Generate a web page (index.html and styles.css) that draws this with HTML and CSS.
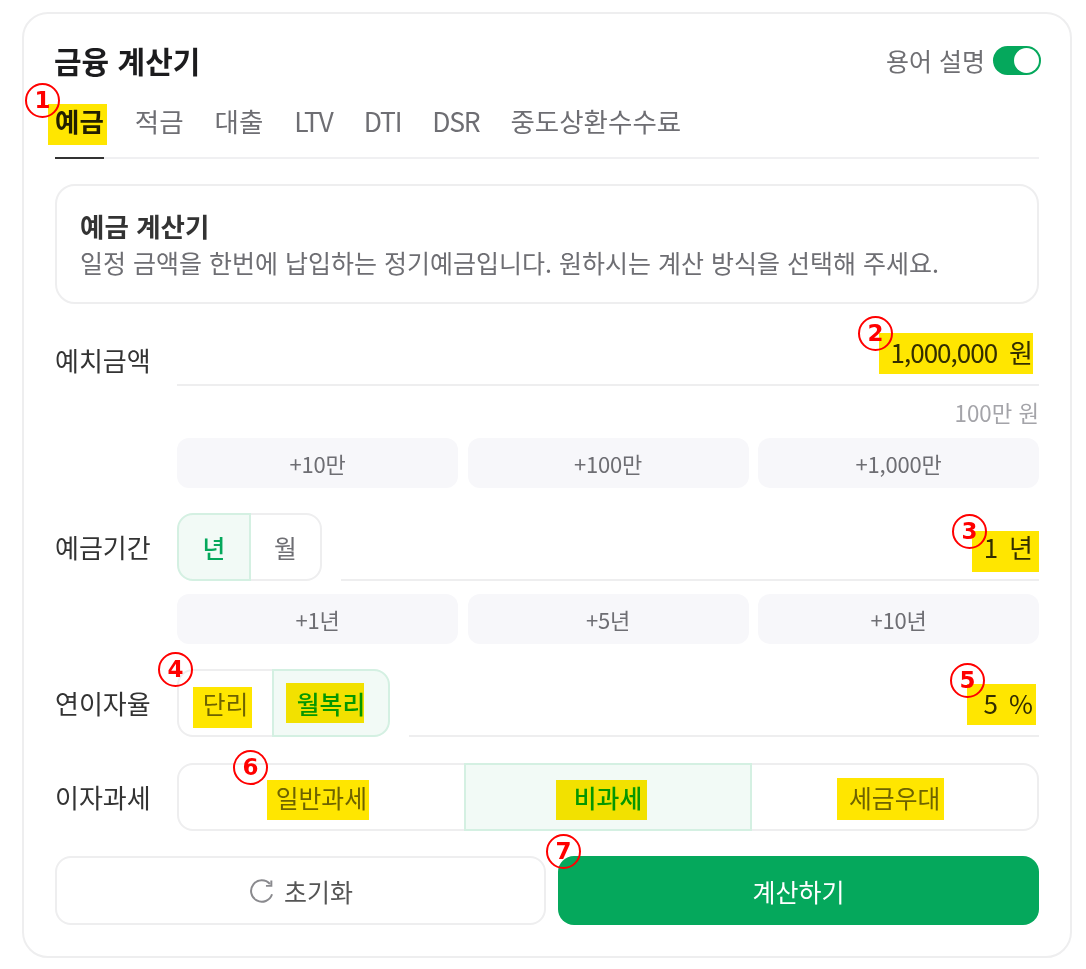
FILE: index.html
```html
<!DOCTYPE html>
<html lang="ko">
<head>
<meta charset="utf-8">
<title>금융 계산기</title>
<link rel="stylesheet" href="styles.css">
</head>
<body>
<div class="page">
  <main class="card">
    <header class="head">
      <h1 class="title">금융 계산기</h1>
      <div class="glossary">
        <span>용어 설명</span>
        <span class="toggle"><span class="knob"></span></span>
      </div>
    </header>
    <nav class="tabs">
      <span class="tab active">예금</span>
      <span class="tab">적금</span>
      <span class="tab">대출</span>
      <span class="tab latin">LTV</span>
      <span class="tab latin">DTI</span>
      <span class="tab latin">DSR</span>
      <span class="tab">중도상환수수료</span>
    </nav>
    <section class="info">
      <h2 class="info-title">예금 계산기</h2>
      <p class="info-text">일정 금액을 한번에 납입하는 정기예금입니다. 원하시는 계산 방식을 선택해 주세요.</p>
    </section>
    <section class="field first">
      <div class="label plain">예치금액</div>
      <div class="control">
        <div class="input tall"><span class="value">1,000,000</span><span>원</span></div>
        <div class="helper">100만 원</div>
        <div class="quick">
          <button class="chip">+10만</button>
          <button class="chip">+100만</button>
          <button class="chip">+1,000만</button>
        </div>
      </div>
    </section>
    <section class="field">
      <div class="label">예금기간</div>
      <div class="control">
        <div class="combo">
          <div class="seg">
            <span class="opt w-year on">년</span>
            <span class="opt w-month">월</span>
          </div>
          <div class="input grow"><span class="value">1</span><span>년</span></div>
        </div>
        <div class="quick spaced">
          <button class="chip">+1년</button>
          <button class="chip">+5년</button>
          <button class="chip">+10년</button>
        </div>
      </div>
    </section>
    <section class="field">
      <div class="label">연이자율</div>
      <div class="combo">
        <div class="seg">
          <span class="opt w-simple">단리</span>
          <span class="opt w-comp on">월복리</span>
        </div>
        <div class="input grow"><span class="value">5</span><span>%</span></div>
      </div>
    </section>
    <section class="field tax">
      <div class="label">이자과세</div>
      <div class="seg full">
        <span class="opt fill">일반과세</span>
        <span class="opt fill on">비과세</span>
        <span class="opt fill">세금우대</span>
      </div>
    </section>
    <div class="actions">
      <button class="btn reset">
        <svg class="icon" viewBox="0 0 24 24" aria-hidden="true"><path d="M20.6 14.8A9.2 9.2 0 1 1 18.8 6"/><path d="M20 3V7.6H15.4"/></svg>
        <span>초기화</span>
      </button>
      <button class="btn submit">계산하기</button>
    </div>
  </main>

  <div class="mark m1"></div><div class="mark m2"></div><div class="mark m3"></div>
  <div class="mark m4a"></div><div class="mark m4b"></div><div class="mark m5"></div>
  <div class="mark m6a"></div><div class="mark m6b"></div><div class="mark m6c"></div>
  <div class="num n1">1</div><div class="num n2">2</div><div class="num n3">3</div>
  <div class="num n4">4</div><div class="num n5">5</div><div class="num n6">6</div><div class="num n7">7</div>
</div>
</body>
</html>
```
FILE: styles.css
```css
* { box-sizing: border-box; }
html, body { margin: 0; background: #fff; }
body {
  font-family: "Noto Sans CJK KR", "Noto Sans", sans-serif;
  color: #333;
}
.page { position: relative; width: 1086px; height: 969px; padding: 12px 14px 11px 22px; overflow: hidden; }
.card {
  height: 946px;
  border: 2px solid #eeeeef;
  border-radius: 26px;
  padding: 28px 31px 30px;
  display: flex;
  flex-direction: column;
}
.head { display: flex; justify-content: space-between; align-items: center; height: 36px; margin-right: -2px; }
.title { margin: 0 0 0 -1px; font-size: 30px; font-weight: 700; color: #1c1c1e; line-height: 38px; }
.glossary { display: flex; align-items: center; gap: 8px; font-size: 25px; color: #6f6f73; }
.toggle { width: 48px; height: 29px; border-radius: 15px; background: #05a85c; padding: 2px; display: flex; justify-content: flex-end; }
.knob { width: 25px; height: 25px; border-radius: 50%; background: #fff; }
.tabs { display: flex; gap: 31px; height: 81px; padding-top: 22px; border-bottom: 2px solid #f0f0f2; }
.tab { font-size: 26.5px; height: 59px; line-height: 42px; color: #6e6e73; white-space: nowrap; }
.tab.latin { letter-spacing: -1.2px; }
.tab.active { color: #222; font-weight: 700; border-bottom: 2px solid #333; }
.info { margin-top: 25px; height: 120px; border: 2px solid #eeeeef; border-radius: 20px; padding: 23px 23px; }
.info-title { margin: 0; font-size: 26.5px; line-height: 34px; font-weight: 700; color: #333; }
.info-text { margin: 1px 0 0; font-size: 25px; line-height: 36px; color: #6e6e73; white-space: nowrap; }
.field { display: grid; grid-template-columns: 122px 1fr; margin-top: 25px; align-items: start; }
.field.first { margin-top: 32px; }
.field.tax { margin-top: 26px; }
.label { font-size: 26px; line-height: 68px; color: #333; }
.label.plain { line-height: 48px; }
.control { min-width: 0; }
.input { display: flex; justify-content: flex-end; align-items: center; gap: 12px; height: 50px; border-bottom: 2px solid #eeeeef; font-size: 26px; color: #333; padding-right: 6px; }
.value { letter-spacing: -1px; }
.input.tall { padding-bottom: 18px; }
.grow { flex: 1; margin-left: 19px; height: 68px; align-items: flex-end; padding-bottom: 14px; }
.helper { font-size: 22.3px; line-height: 52px; height: 52px; text-align: right; color: #a4a4a9; }
.quick { display: grid; grid-template-columns: repeat(3, 1fr); gap: 9.5px; }
.spaced { margin-top: 13px; }
.chip { height: 50px; border: 0; border-radius: 12px; background: #f7f7fa; font: inherit; font-size: 22px; letter-spacing: -0.2px; color: #6e6e73; }
.combo { display: flex; align-items: stretch; }
.seg { display: flex; height: 68px; }
.seg.full { width: 100%; }
.opt { display: flex; align-items: center; justify-content: center; font-size: 24.8px; color: #6e6e73; border: 2px solid #eeeeef; }
.opt + .opt { margin-left: -2px; }
.opt:first-child { border-radius: 16px 0 0 16px; }
.opt:last-child { border-radius: 0 16px 16px 0; }
.opt.on { position: relative; background: #f2faf6; color: #05a85c; font-weight: 500; border-color: #d4f0e2; }
.w-year { width: 74px; }
.w-month { width: 73px; }
.w-simple { width: 97px; }
.w-comp { width: 118px; }
.fill { flex: 1; }
.actions { display: grid; grid-template-columns: 491px 1fr; gap: 12px; margin-top: 25px; }
.btn { height: 69px; border-radius: 16px; font: inherit; font-size: 25px; display: flex; align-items: center; justify-content: center; }
.reset { background: #fff; border: 2px solid #eeeeef; color: #555; gap: 8px; }
.submit { background: #05a85c; border: 0; color: #fff; }
.icon { width: 28px; height: 28px; fill: none; stroke: #8a8a8e; stroke-width: 1.7; }

.mark { position: absolute; background: #ffe600; mix-blend-mode: multiply; }
.m1 { left: 48px; top: 104px; width: 59px; height: 41px; }
.m2 { left: 879px; top: 333px; width: 154px; height: 41px; }
.m3 { left: 972px; top: 531px; width: 67px; height: 41px; }
.m4a { left: 193px; top: 687px; width: 59px; height: 41px; }
.m4b { left: 286px; top: 683px; width: 78px; height: 40px; }
.m5 { left: 967px; top: 684px; width: 69px; height: 41px; }
.m6a { left: 267px; top: 780px; width: 102px; height: 40px; }
.m6b { left: 556px; top: 780px; width: 91px; height: 40px; }
.m6c { left: 837px; top: 778px; width: 107px; height: 42px; }

.num {
  position: absolute;
  width: 35px; height: 35px;
  border: 2px solid #f00;
  border-radius: 50%;
  color: #f00;
  font-family: "DejaVu Sans", sans-serif;
  font-weight: 700;
  font-size: 23px;
  line-height: 30px;
  text-align: center;
}
.n1 { left: 25px; top: 83px; }
.n2 { left: 858px; top: 316px; }
.n3 { left: 952px; top: 514px; }
.n4 { left: 158px; top: 652px; }
.n5 { left: 950px; top: 663px; }
.n6 { left: 233px; top: 750px; }
.n7 { left: 546px; top: 834px; }
```
